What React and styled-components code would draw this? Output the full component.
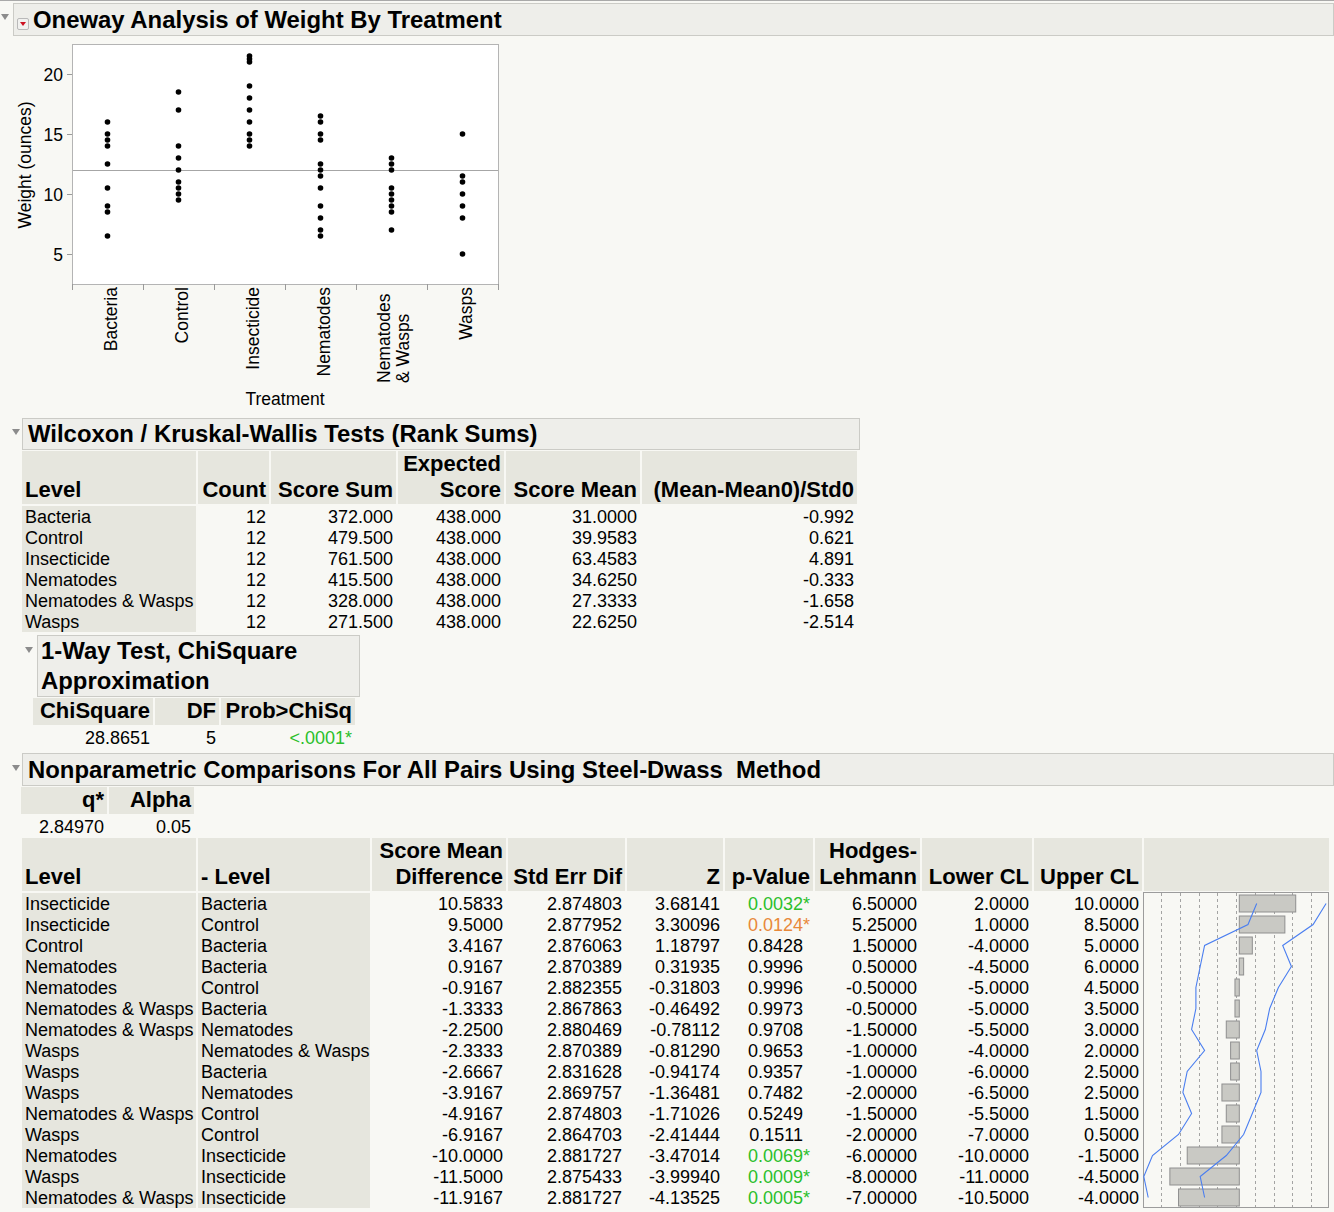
import React from "react";
import styled, { createGlobalStyle } from "styled-components";

const GlobalStyle = createGlobalStyle`
  html, body { margin: 0; padding: 0; background: #f8f8f4; }
  body { font-family: "Liberation Sans", Arial, Helvetica, sans-serif; color: #000; }
`;

const Page = styled.div`
  width: 1334px;
  min-height: 1212px;
  box-sizing: border-box;
  border-top: 1px solid #a9a9a9;
  padding-top: 2px;
`;

const HeadRow = styled.div`
  display: flex;
  align-items: flex-start;
  padding-left: ${(p) => p.$at}px;
  margin-top: ${(p) => p.$mt || 0}px;
`;

const Toggle = styled.span`
  flex: none;
  width: 0;
  height: 0;
  border-left: 4px solid transparent;
  border-right: 4px solid transparent;
  border-top: 6px solid #8c8c8c;
  margin-top: ${(p) => p.$y}px;
  margin-right: ${(p) => p.$gap}px;
`;

const TitleBox = styled.div`
  box-sizing: border-box;
  flex: ${(p) => (p.$w ? "none" : 1)};
  width: ${(p) => (p.$w ? `${p.$w}px` : "auto")};
  background: #eeeeea;
  border: 1px solid #cbcbc6;
  padding-left: ${(p) => p.$pl}px;
  font-size: 23.9px;
  font-weight: bold;
  line-height: ${(p) => p.$lh || 30}px;
`;

const MenuBtn = styled.span`
  display: inline-flex;
  align-items: center;
  justify-content: center;
  box-sizing: border-box;
  width: 12px;
  height: 12px;
  margin-right: 4px;
  vertical-align: 2px;
  border: 1px solid #b9b9b9;
  border-radius: 2px;
  background: #f1f1ef;
  &::after {
    content: "";
    border-left: 3.5px solid transparent;
    border-right: 3.5px solid transparent;
    border-top: 4px solid #cc1122;
  }
`;

const PlotSvg = styled.svg`
  display: block;
  font-family: "Liberation Sans", Arial, sans-serif;
  font-size: 17.5px;
`;

const Grid = styled.div`
  display: grid;
  grid-template-columns: ${(p) => p.$cols};
  column-gap: 2px;
  width: max-content;
  margin-left: ${(p) => p.$left}px;
  margin-top: ${(p) => p.$mt || 0}px;
`;

const HeadCell = styled.div`
  display: flex;
  flex-direction: column;
  justify-content: flex-end;
  align-items: ${(p) => (p.$left ? "flex-start" : "flex-end")};
  background: #e6e6de;
  margin-bottom: 2px;
  padding: 0 3px 1px;
  font-size: 22px;
  font-weight: bold;
  line-height: 26px;
  text-align: ${(p) => (p.$left ? "left" : "right")};
  white-space: nowrap;
`;

const Cell = styled.div`
  height: 20px;
  padding: 1px 3px 0;
  font-size: 18px;
  line-height: 21px;
  text-align: ${(p) => (p.$left ? "left" : "right")};
  background: ${(p) => (p.$shade ? "#e6e6de" : "transparent")};
  color: ${(p) => p.$color || "#000"};
  white-space: nowrap;
  overflow: visible;
`;

const Star = styled.span`
  visibility: ${(p) => (p.$on ? "visible" : "hidden")};
`;

const ChartSlot = styled.div`
  grid-column: 10;
  grid-row: 2 / span 15;
  margin: -1px 0 0 -1px;
`;

const ChartSvg = styled.svg`
  display: block;
`;

const GREEN = "#2bbf2b";
const ORANGE = "#e8893a";

const groups = [
  { name: ["Bacteria"], vals: [16, 15, 14.5, 14, 12.5, 10.5, 9, 8.5, 6.5] },
  { name: ["Control"], vals: [18.5, 17, 14, 13, 12, 11, 10.5, 10, 9.5] },
  { name: ["Insecticide"], vals: [21.5, 21.25, 21, 19, 18, 17, 16, 15, 14.5, 14] },
  { name: ["Nematodes"], vals: [16.5, 16, 15, 14.5, 12.5, 12, 11.5, 10.5, 9, 8, 7, 6.5] },
  { name: ["Nematodes", "& Wasps"], vals: [13, 12.5, 12, 10.5, 10, 9.5, 9, 8.5, 7] },
  { name: ["Wasps"], vals: [15, 11.5, 11, 10, 9, 8, 5] },
];

const wilcoxon = [
  ["Bacteria", "12", "372.000", "438.000", "31.0000", "-0.992"],
  ["Control", "12", "479.500", "438.000", "39.9583", "0.621"],
  ["Insecticide", "12", "761.500", "438.000", "63.4583", "4.891"],
  ["Nematodes", "12", "415.500", "438.000", "34.6250", "-0.333"],
  ["Nematodes & Wasps", "12", "328.000", "438.000", "27.3333", "-1.658"],
  ["Wasps", "12", "271.500", "438.000", "22.6250", "-2.514"],
];

// level, - level, diff, std err, Z, p, sig colour, HL, lower, upper
const pairs = [
  ["Insecticide", "Bacteria", "10.5833", "2.874803", "3.68141", "0.0032", GREEN, 6.5, 2, 10],
  ["Insecticide", "Control", "9.5000", "2.877952", "3.30096", "0.0124", ORANGE, 5.25, 1, 8.5],
  ["Control", "Bacteria", "3.4167", "2.876063", "1.18797", "0.8428", null, 1.5, -4, 5],
  ["Nematodes", "Bacteria", "0.9167", "2.870389", "0.31935", "0.9996", null, 0.5, -4.5, 6],
  ["Nematodes", "Control", "-0.9167", "2.882355", "-0.31803", "0.9996", null, -0.5, -5, 4.5],
  ["Nematodes & Wasps", "Bacteria", "-1.3333", "2.867863", "-0.46492", "0.9973", null, -0.5, -5, 3.5],
  ["Nematodes & Wasps", "Nematodes", "-2.2500", "2.880469", "-0.78112", "0.9708", null, -1.5, -5.5, 3],
  ["Wasps", "Nematodes & Wasps", "-2.3333", "2.870389", "-0.81290", "0.9653", null, -1, -4, 2],
  ["Wasps", "Bacteria", "-2.6667", "2.831628", "-0.94174", "0.9357", null, -1, -6, 2.5],
  ["Wasps", "Nematodes", "-3.9167", "2.869757", "-1.36481", "0.7482", null, -2, -6.5, 2.5],
  ["Nematodes & Wasps", "Control", "-4.9167", "2.874803", "-1.71026", "0.5249", null, -1.5, -5.5, 1.5],
  ["Wasps", "Control", "-6.9167", "2.864703", "-2.41444", "0.1511", null, -2, -7, 0.5],
  ["Nematodes", "Insecticide", "-10.0000", "2.881727", "-3.47014", "0.0069", GREEN, -6, -10, -1.5],
  ["Wasps", "Insecticide", "-11.5000", "2.875433", "-3.99940", "0.0009", GREEN, -8, -11, -4.5],
  ["Nematodes & Wasps", "Insecticide", "-11.9167", "2.881727", "-4.13525", "0.0005", GREEN, -7, -10.5, -4],
];

const fmt = (v) => (v < 0 ? "-" : "") + Math.abs(v).toFixed(5);
const fmt4 = (v) => (v < 0 ? "-" : "") + Math.abs(v).toFixed(4);

function OnewayPlot() {
  const yOf = (v) => 314 - 12 * v;
  return (
    <PlotSvg width="500" height="374" viewBox="0 36 500 374">
      <rect x="72.5" y="44.5" width="426" height="240" fill="#fff" stroke="#b4b4b4" />
      <line x1="73" x2="498" y1="170.5" y2="170.5" stroke="#a6a6a6" />
      {[5, 10, 15, 20].map((v) => (
        <g key={v}>
          <line x1="67" x2="72" y1={yOf(v) + 0.5} y2={yOf(v) + 0.5} stroke="#9a9a9a" />
          <text x="63" y={yOf(v) + 6.5} textAnchor="end">{v}</text>
        </g>
      ))}
      {[0, 1, 2, 3, 4, 5, 6].map((k) => (
        <line key={k} x1={72.5 + 71 * k} x2={72.5 + 71 * k} y1="284" y2="290" stroke="#9a9a9a" />
      ))}
      {groups.map((g, i) => {
        const cx = 107.5 + 71 * i;
        return (
          <g key={i}>
            {g.vals.map((v, j) => (
              <circle key={j} cx={cx} cy={yOf(v)} r="2.8" fill="#000" />
            ))}
            {g.name.length === 1 ? (
              <text transform={`translate(${cx + 9.5},287) rotate(-90)`} textAnchor="end">
                {g.name[0]}
              </text>
            ) : (
              g.name.map((line, l) => (
                <text key={l} transform={`translate(${390 + 19 * l},383) rotate(-90)`}>
                  {line}
                </text>
              ))
            )}
          </g>
        );
      })}
      <text transform="translate(31,165) rotate(-90)" textAnchor="middle">Weight (ounces)</text>
      <text x="285" y="405" textAnchor="middle">Treatment</text>
    </PlotSvg>
  );
}

function DiffChart() {
  const xv = (v) => 1239.3 + 8.68 * v;
  const cy = (i) => 893 + 21 * i + 10.5;
  const lower = pairs.map((r, i) => `${xv(r[8]).toFixed(1)},${cy(i)}`).join(" ");
  const upper = pairs.map((r, i) => `${xv(r[9]).toFixed(1)},${cy(i)}`).join(" ");
  return (
    <ChartSvg width="187" height="316" viewBox="1143 892 187 316">
      <rect x="1143.5" y="892.5" width="185" height="315" fill="#f8f8f4" stroke="#9c9c9c" />
      {Array.from({ length: 9 }, (_, k) => {
        const x = Math.round(1161.3 + 18.7 * k) + 0.5;
        return (
          <line key={k} x1={x} x2={x} y1="893" y2="1207" stroke="#8e8e8e" strokeWidth="0.8" strokeDasharray="3 3" />
        );
      })}
      {pairs.map((r, i) => {
        const a = Math.min(xv(0), xv(r[7]));
        const b = Math.max(xv(0), xv(r[7]));
        return (
          <rect key={i} x={a} y={893 + 21 * i + 2} width={b - a} height="17" fill="#c9c9c4" stroke="#8f8f8f" />
        );
      })}
      <polyline points={lower} fill="none" stroke="#4a7ef0" strokeWidth="1.1" />
      <polyline points={upper} fill="none" stroke="#4a7ef0" strokeWidth="1.1" />
    </ChartSvg>
  );
}

export default function App() {
  return (
    <Page>
      <GlobalStyle />
      <section>
        <HeadRow $at={1}>
          <Toggle $y={11} $gap={4} />
          <TitleBox $pl={3} $lh={31}>
            <MenuBtn />
            Oneway Analysis of Weight By Treatment
          </TitleBox>
        </HeadRow>
        <OnewayPlot />

        <section>
          <HeadRow $at={12} $mt={8}>
            <Toggle $y={11} $gap={2} />
            <TitleBox $w={838} $pl={5}>Wilcoxon / Kruskal-Wallis Tests (Rank Sums)</TitleBox>
          </HeadRow>
          <Grid $cols="174px 71px 125px 106px 134px 215px" $left={22} $mt={1}>
            <HeadCell $left>Level</HeadCell>
            <HeadCell>Count</HeadCell>
            <HeadCell>Score Sum</HeadCell>
            <HeadCell>
              <span>Expected</span>
              <span>Score</span>
            </HeadCell>
            <HeadCell>Score Mean</HeadCell>
            <HeadCell>(Mean-Mean0)/Std0</HeadCell>
            {wilcoxon.map((r) =>
              r.map((c, j) => (
                <Cell key={r[0] + j} $left={j === 0} $shade={j === 0}>
                  {c}
                </Cell>
              ))
            )}
          </Grid>

          <section>
            <HeadRow $at={25} $mt={3}>
              <Toggle $y={12} $gap={4} />
              <TitleBox $w={323} $pl={3}>1-Way Test, ChiSquare Approximation</TitleBox>
            </HeadRow>
            <Grid $cols="120px 64px 134px" $left={33} $mt={1}>
              <HeadCell>ChiSquare</HeadCell>
              <HeadCell>DF</HeadCell>
              <HeadCell>Prob&gt;ChiSq</HeadCell>
              <Cell>28.8651</Cell>
              <Cell>5</Cell>
              <Cell $color={GREEN}>&lt;.0001*</Cell>
            </Grid>
          </section>
        </section>

        <section>
          <HeadRow $at={12} $mt={5}>
            <Toggle $y={12} $gap={2} />
            <TitleBox $pl={5} $lh={31}>
              {"Nonparametric Comparisons For All Pairs Using Steel-Dwass\u00a0 Method"}
            </TitleBox>
          </HeadRow>
          <Grid $cols="86px 85px" $left={21} $mt={1}>
            <HeadCell>q*</HeadCell>
            <HeadCell>Alpha</HeadCell>
            <Cell>2.84970</Cell>
            <Cell>0.05</Cell>
          </Grid>
          <Grid
            $cols="174px 172px 134px 117px 96px 88px 105px 110px 108px 185px"
            $left={22}
            $mt={1}
          >
            <HeadCell $left>Level</HeadCell>
            <HeadCell $left>- Level</HeadCell>
            <HeadCell>
              <span>Score Mean</span>
              <span>Difference</span>
            </HeadCell>
            <HeadCell>Std Err Dif</HeadCell>
            <HeadCell>Z</HeadCell>
            <HeadCell>p-Value</HeadCell>
            <HeadCell>
              <span>Hodges-</span>
              <span>Lehmann</span>
            </HeadCell>
            <HeadCell>Lower CL</HeadCell>
            <HeadCell>Upper CL</HeadCell>
            <HeadCell />
            {pairs.map((r, i) => (
              <React.Fragment key={i}>
                <Cell $left $shade>{r[0]}</Cell>
                <Cell $left $shade>{r[1]}</Cell>
                <Cell>{r[2]}</Cell>
                <Cell>{r[3]}</Cell>
                <Cell>{r[4]}</Cell>
                <Cell $color={r[6]}>
                  {r[5]}
                  <Star $on={!!r[6]}>*</Star>
                </Cell>
                <Cell>{fmt(r[7])}</Cell>
                <Cell>{fmt4(r[8])}</Cell>
                <Cell>{fmt4(r[9])}</Cell>
              </React.Fragment>
            ))}
            <ChartSlot>
              <DiffChart />
            </ChartSlot>
          </Grid>
        </section>
      </section>
    </Page>
  );
}
